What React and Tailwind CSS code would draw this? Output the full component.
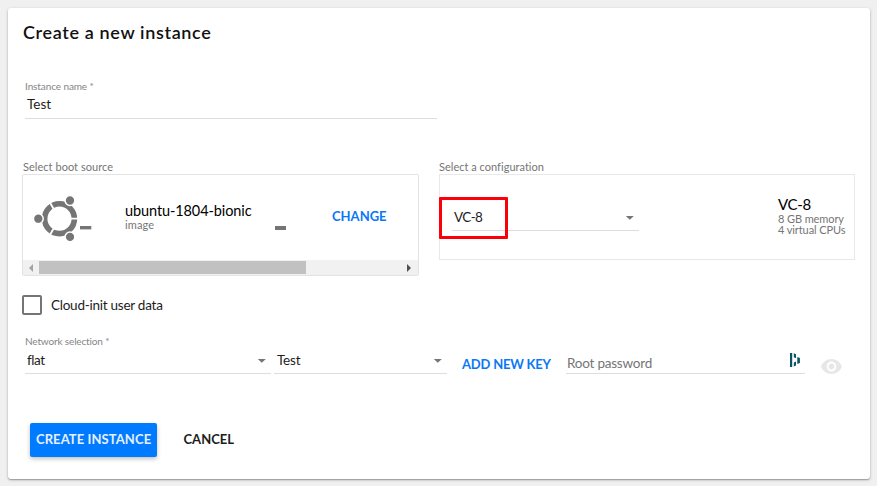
function Caret({ className = "" }) {
  return (
    <svg className={"h-1 w-2.5 shrink-0 " + className} viewBox="0 0 10 4">
      <path d="M.8 0h8L4.8 3.8z" fill="#757575" />
    </svg>
  );
}

function UbuntuLogo() {
  return (
    <svg className="mt-[19px] h-[50px] w-[60px] shrink-0" viewBox="0 0 60 50">
      <circle cx="26.5" cy="24.7" r="14.9" fill="none" stroke="#757575" strokeWidth="5.6" />
      <g stroke="#fff" strokeWidth="1.8">
        <path d="M26.3 24.7H46M26.3 24.7l-9.8-17M26.3 24.7l-9.8 17" />
      </g>
      <g fill="#757575" stroke="#fff" strokeWidth="1.5">
        <circle cx="5.3" cy="24.7" r="4.9" />
        <circle cx="37" cy="6.5" r="4.9" />
        <circle cx="37" cy="42.9" r="4.9" />
      </g>
      <path d="M47 32h11.3v3.4H47z" fill="#757575" />
    </svg>
  );
}

function PasswordManagerIcon() {
  return (
    <svg className="mt-[1px] h-[14px] w-[10px] shrink-0" viewBox="0 0 10 14">
      <path
        d="M0 0h2.2v14H0zM3.8 .3l2.2 .9v4l-2.2-1zM3.8 9.4l2.2-1v4.2l-2.2 1zM7.3 3.9l2.6 1v5.2l-2.6 1z"
        fill="#0c5366"
      />
    </svg>
  );
}

function Eye() {
  return (
    <svg className="mt-[5px] ml-4 h-[15px] w-[21px] shrink-0" viewBox="1 4.5 22 15" preserveAspectRatio="none">
      <path
        fill="#e7e7e7"
        d="M12 4.5C7 4.5 2.73 7.61 1 12c1.73 4.39 6 7.5 11 7.5s9.27-3.11 11-7.5c-1.73-4.39-6-7.5-11-7.5zM12 17c-2.76 0-5-2.24-5-5s2.24-5 5-5 5 2.24 5 5-2.24 5-5 5zm0-8c-1.66 0-3 1.34-3 3s1.34 3 3 3 3-1.34 3-3-1.34-3-3-3z"
      />
    </svg>
  );
}

export default function App() {
  return (
    <div className="h-[486px] w-[877px] overflow-hidden bg-[#f0f0f0] pt-2 pl-2 font-['Lato',sans-serif] whitespace-nowrap text-[#1c1c1c]">
      <main className="h-[471px] w-[862px] rounded-[3px] bg-white pt-3 shadow-[0_1px_3px_rgba(0,0,0,.25),0_1px_1px_rgba(0,0,0,.2)]">
        <h1 className="ml-[15px] h-6 text-[18px] leading-6 font-semibold tracking-[.64px] text-[#111]">Create a new instance</h1>

        <div className="mt-[35px] ml-[17px] h-10 w-[412px] border-b border-[#dedede]">
          <label className="block h-3 text-[10px] leading-[14px] tracking-[-.1px] text-[#858585]">Instance name *</label>
          <div className="pt-[3px] pl-[2px] text-[13.5px] leading-5">Test</div>
        </div>

        <div className="mt-[41px] flex">
          <section className="ml-[14px] w-[397px]">
            <h2 className="h-[14px] pl-px text-[11px] leading-[13px] tracking-[.04px] text-[#757575]">Select boot source</h2>
            <div className="h-[102px] rounded-[2px] border border-[#e3e3e3]">
              <div className="flex h-[85px]">
                <div className="ml-[10px] flex"><UbuntuLogo /></div>
                <div className="ml-[32px] w-[150px] pt-[26px]">
                  <div className="h-[18px] text-[14.5px] leading-5 tracking-[-.1px] text-black">ubuntu-1804-bionic</div>
                  <div className="text-[11px] leading-[11px] tracking-[.1px] text-[#757575]">image</div>
                </div>
                <div className="mt-[51px] h-[3.5px] w-[11px] bg-[#757575]" />
                <button className="mt-[31px] ml-[46px] h-5 text-[13px] leading-5 font-bold text-[#0a78f5]">CHANGE</button>
              </div>
              <div className="flex h-[15px] items-center bg-[#f1f1f1]">
                <svg className="ml-[6px] h-2 w-1" viewBox="0 0 4 8"><path d="M4 0v8L0 4z" fill="#a3a3a3" /></svg>
                <div className="ml-[6px] h-[13px] w-[267px] bg-[#c1c1c1]" />
                <svg className="ml-[101px] h-2 w-1" viewBox="0 0 4 8"><path d="M0 0v8l4-4z" fill="#505050" /></svg>
              </div>
            </div>
          </section>

          <section className="ml-5 w-[416px]">
            <h2 className="h-[14px] text-[11px] leading-[13px] tracking-[.02px] text-[#757575]">Select a configuration</h2>
            <div className="relative flex h-[86px] border border-[#e8e8e8]">
              <div className="mt-[31px] ml-[12px] flex h-[25px] w-[187px] border-b border-[#dedede] pl-[2px]">
                <span className="text-[13.5px] leading-[22px] tracking-[-.6px]">VC-8</span>
                <Caret className="mt-[10px] mr-1 ml-auto" />
              </div>
              <div className="mt-[19px] ml-[139px]">
                <div className="h-[19px] text-[15px] leading-5 tracking-[-.3px] text-black">VC-8</div>
                <div className="h-[11px] text-[11px] leading-[11px] tracking-[-.1px] text-[#757575]">8 GB memory</div>
                <div className="text-[11px] leading-[11px] tracking-[-.1px] text-[#757575]">4 virtual CPUs</div>
              </div>
              <div className="absolute top-[22px] -left-px h-[42px] w-[69px] rounded-[1px] border-3 border-[#fb0009]" />
            </div>
          </section>
        </div>

        <div className="mt-[19px] ml-[14px] flex h-5 items-center">
          <span className="h-5 w-5 rounded-[2px] border-2 border-[#757575]" />
          <span className="ml-[9px] text-[13.5px] leading-5 tracking-[-.25px]">Cloud-init user data</span>
        </div>

        <div className="mt-[19px] ml-[17px] h-3 text-[10px] leading-[14px] tracking-[-.15px] text-[#858585]">Network selection *</div>
        <div className="ml-[17px] flex h-7">
          <div className="flex h-7 w-[246px] border-b border-[#dedede] pt-[4px] pl-[2px]">
            <span className="text-[13.5px] leading-5 tracking-[-.4px]">flat</span>
            <Caret className="mt-[9px] mr-1 ml-auto" />
          </div>
          <div className="ml-[3px] flex h-7 w-[173px] border-b border-[#dedede] pt-[4px] pl-[3px]">
            <span className="text-[13.5px] leading-5 tracking-[-.2px]">Test</span>
            <Caret className="mt-[9px] mr-1 ml-auto" />
          </div>
          <button className="mt-[8px] ml-[15px] h-5 w-[89px] text-left text-[13px] leading-5 font-bold tracking-[-.2px] text-[#0a78f5]">ADD NEW KEY</button>
          <div className="ml-[15px] flex h-7 w-[239px] border-b border-[#dedede] pt-[6px] pl-px">
            <span className="text-[13.5px] leading-[22px] tracking-[-.22px] text-[#757575]">Root password</span>
            <div className="mr-[5px] ml-auto"><PasswordManagerIcon /></div>
          </div>
          <div className="pt-2"><Eye /></div>
        </div>

        <div className="mt-[49px] ml-[22px] flex h-[34px]">
          <button className="flex h-[34px] w-[127px] rounded-[2px] bg-[#007bff] pl-1.5 text-left text-[13px] leading-[33px] font-bold tracking-[.08px] text-[#e5f1ff] shadow-[0_2px_4px_rgba(0,0,0,.25)]">CREATE INSTANCE</button>
          <button className="ml-[26.5px] flex text-[13px] leading-[33px] font-bold">CANCEL</button>
        </div>
      </main>
    </div>
  );
}
